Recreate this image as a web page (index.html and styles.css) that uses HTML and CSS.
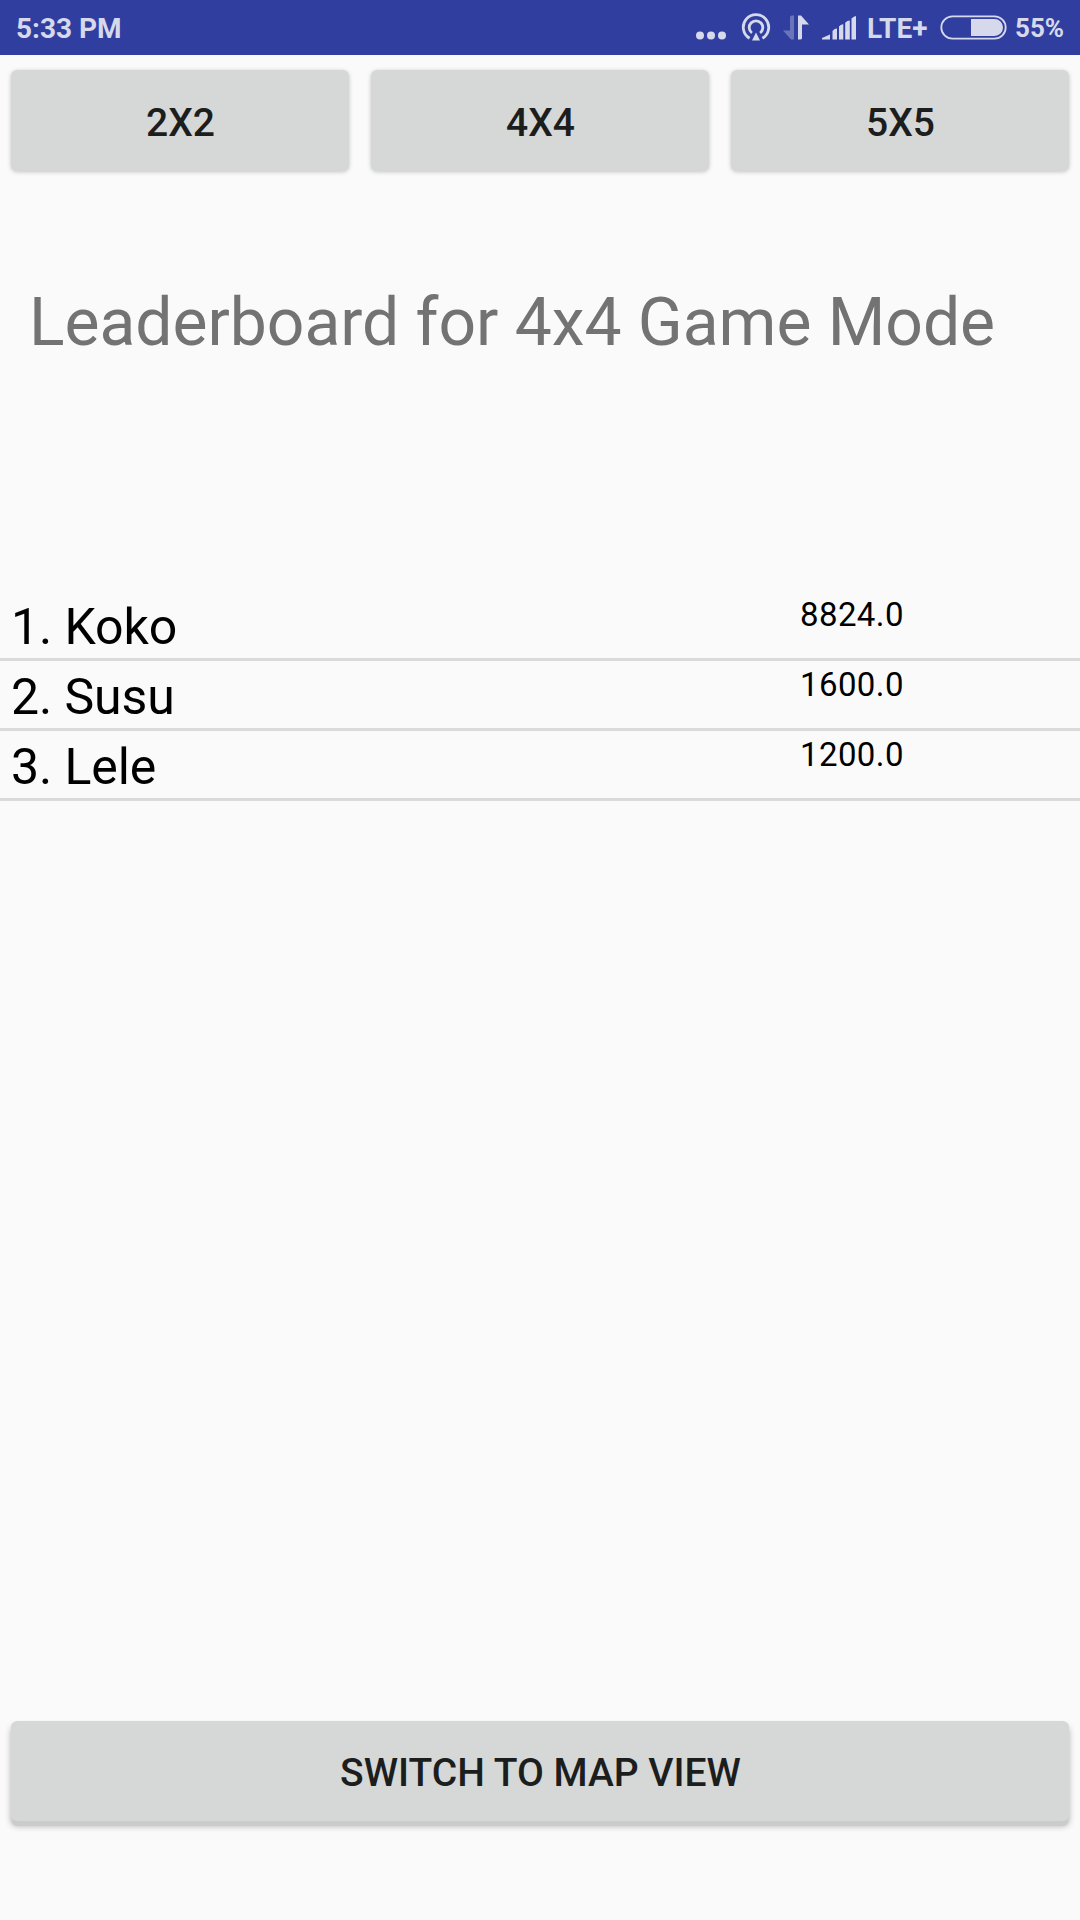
FILE: index.html
```html
<!DOCTYPE html>
<html lang="en">
<head>
<meta charset="utf-8">
<title>Leaderboard</title>
<link rel="stylesheet" href="styles.css">
</head>
<body>
<header class="status">
  <span class="clock">5:33 PM</span>
  <div class="indicators">
    <svg class="icons" width="187" height="55" viewBox="680 0 187 55" fill="#d6d9ec">
      <circle cx="700" cy="35.6" r="4"/><circle cx="711" cy="35.6" r="4"/><circle cx="722" cy="35.6" r="4"/>
      <g fill="none" stroke="#d6d9ec" stroke-width="2.8">
        <path d="M749.6 38.3A12.7 12.7 0 1 1 762.4 38.3"/>
        <path d="M751.9 33A6.8 6.8 0 1 1 760.1 33"/>
      </g>
      <path d="M756 32.6L760 40.6H752Z"/>
      <path d="M794 15.5V39.5H791L783 30.5H790V17Q790 15.5 792 15.5Z" opacity=".35"/>
      <path d="M798 39.5V15.5H801L809 24.5H802V38Q802 39.5 800 39.5Z"/>
      <path d="M822 39.5V38L830 34.5V39.5ZM832.5 39.5V31Q834.5 28.6 837 28.6V39.5ZM839 39.5V26.5Q841 24.3 843.3 24.3V39.5ZM845.2 39.5V22.7Q847.2 20.6 849.8 20.6V39.5ZM851.5 39.5V18.5Q854 16 856 16V39.5Z"/>
    </svg>
    <span class="network">LTE+</span>
    <svg class="battery" width="68" height="26" viewBox="0 0 68 26">
      <rect x="1.3" y="1.3" width="64.4" height="22.4" rx="11.2" fill="none" stroke="#d6d9ec" stroke-width="1.8"/>
      <path d="M31 4H54.5A8.5 8.5 0 0 1 54.5 21H31Z" fill="#d6d9ec"/>
    </svg>
    <span class="percent">55%</span>
  </div>
</header>
<nav class="modes">
  <button class="btn">2X2</button>
  <button class="btn">4X4</button>
  <button class="btn">5X5</button>
</nav>
<h1 class="title">Leaderboard for 4x4 Game Mode</h1>
<main class="list">
  <div class="row"><span class="name">1. Koko</span><span class="score">8824.0</span></div>
  <div class="row"><span class="name">2. Susu</span><span class="score">1600.0</span></div>
  <div class="row"><span class="name">3. Lele</span><span class="score">1200.0</span></div>
</main>
<footer class="actions">
  <button class="btn btn-raised">SWITCH TO MAP VIEW</button>
</footer>
</body>
</html>
```
FILE: styles.css
```css
* { box-sizing: border-box; }
body {
  margin: 0;
  height: 1920px;
  display: flex;
  flex-direction: column;
  background: #fafafa;
  color: #000;
  font-family: Roboto, sans-serif;
}
.status {
  height: 55px;
  display: flex;
  justify-content: space-between;
  background: #303f9f;
  color: #d6d9ec;
  font-weight: 700;
  font-size: 28px;
  line-height: 57px;
}
.clock { padding-left: 16px; }
.indicators { display: flex; width: 400px; }
.network { width: 73px; }
.battery { margin-top: 15px; }
.percent { padding-left: 7px; font-size: 26px; }
.modes {
  display: flex;
  gap: 22px;
  padding: 15px 11px 0;
}
.btn {
  flex: 1;
  height: 101px;
  padding: 5px 0 0 1px;
  border: 0;
  border-radius: 6px;
  background: #d6d8d7;
  color: #1c1d1d;
  font: 500 39px/96px Roboto, sans-serif;
  box-shadow: 0 1px 4px rgba(0, 0, 0, .22);
}
.title {
  margin: 112px 0 0;
  padding-left: 29px;
  height: 80px;
  font-size: 66px;
  line-height: 80px;
  font-weight: 400;
  letter-spacing: -.04px;
  color: #737373;
  white-space: nowrap;
}
.list { margin-top: 228px; flex: 1; }
.row {
  display: grid;
  grid-template-columns: 800px 1fr;
  height: 70px;
  padding: 5px 0 0 11px;
  border-bottom: 3px solid #dadada;
}
.row .score { margin-left: -11px; }
.name { font-size: 50px; line-height: 62px; letter-spacing: -.1px; }
.score { font-size: 33px; line-height: 38px; letter-spacing: .4px; }
.actions { display: flex; padding: 0 11px 99px; }
.btn-raised {
  height: 100px;
  padding-top: 4px;
  box-shadow: 0 6px 0 -1px #cbcbcb, 0 5px 6px rgba(0, 0, 0, .3);
}
```
